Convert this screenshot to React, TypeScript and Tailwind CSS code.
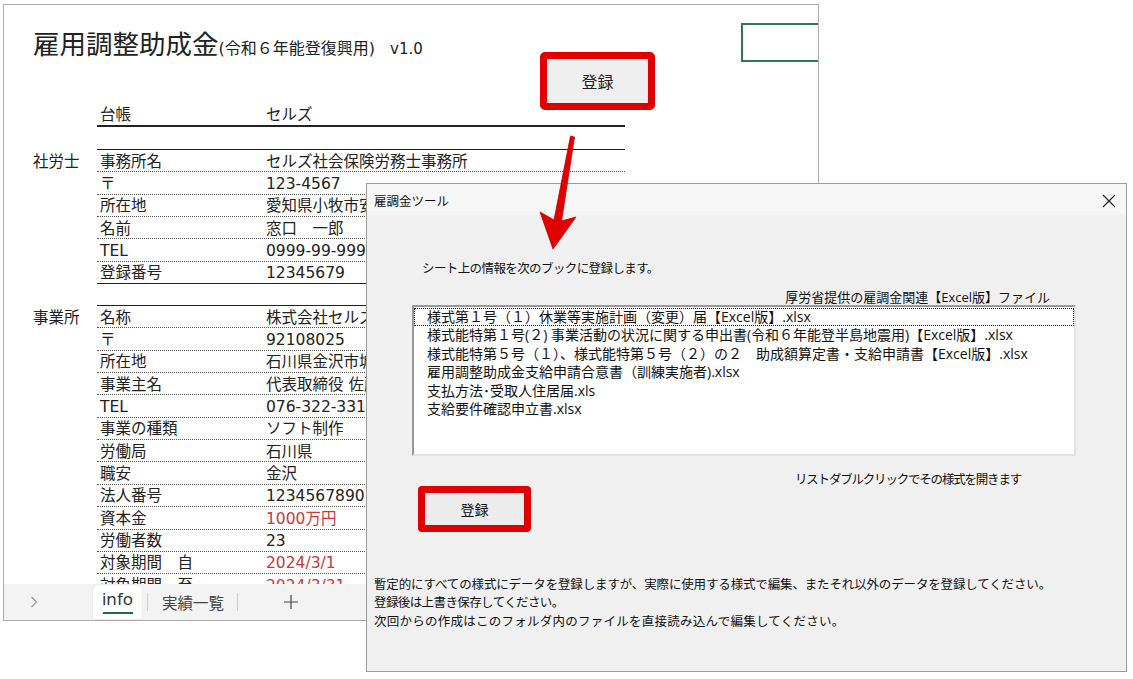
import React from "react";

type Row = { label: string; value: string; red?: boolean };

const sharoushi: Row[] = [
  { label: "事務所名", value: "セルズ社会保険労務士事務所" },
  { label: "〒", value: "123-4567" },
  { label: "所在地", value: "愛知県小牧市安田町１２３" },
  { label: "名前", value: "窓口　一郎" },
  { label: "TEL", value: "0999-99-9999" },
  { label: "登録番号", value: "12345679" },
];

const jigyousho: Row[] = [
  { label: "名称", value: "株式会社セルズ" },
  { label: "〒", value: "92108025" },
  { label: "所在地", value: "石川県金沢市城南１丁目" },
  { label: "事業主名", value: "代表取締役 佐藤 太郎" },
  { label: "TEL", value: "076-322-3311" },
  { label: "事業の種類", value: "ソフト制作" },
  { label: "労働局", value: "石川県" },
  { label: "職安", value: "金沢" },
  { label: "法人番号", value: "1234567890123" },
  { label: "資本金", value: "1000万円", red: true },
  { label: "労働者数", value: "23" },
  { label: "対象期間　自", value: "2024/3/1", red: true },
  { label: "対象期間　至", value: "2024/3/31", red: true },
];

const files = [
  "様式第１号（１）休業等実施計画（変更）届【Excel版】.xlsx",
  "様式能特第１号(２) 事業活動の状況に関する申出書(令和６年能登半島地震用)【Excel版】.xlsx",
  "様式能特第５号（１）、様式能特第５号（２）の２　助成額算定書・支給申請書【Excel版】.xlsx",
  "雇用調整助成金支給申請合意書（訓練実施者).xlsx",
  "支払方法･受取人住居届.xls",
  "支給要件確認申立書.xlsx",
];

function SheetRow({ row, last }: { row: Row; last?: boolean }) {
  return (
    <div
      className={
        last
          ? "flex items-center h-[22.35px] border-b border-[#222] whitespace-nowrap"
          : "flex items-center h-[22.35px] border-b border-dotted border-[#555] whitespace-nowrap"
      }
    >
      <div className="w-[166px] pl-[3px] pt-[3px]">{row.label}</div>
      <div className={row.red ? "pl-[3px] pt-[3px] text-[#c9383b]" : "pl-[3px] pt-[3px]"}>{row.value}</div>
    </div>
  );
}

function Group({ title, rows }: { title: string; rows: Row[] }) {
  return (
    <div className="flex">
      <div className="w-[64px] h-[22.35px] mt-[1px] pt-[3px] flex items-center">{title}</div>
      <div className="w-[528px] border-t border-[#222]">
        {rows.map((r, i) => (
          <SheetRow key={r.label + i} row={r} last={i === rows.length - 1} />
        ))}
      </div>
    </div>
  );
}

const App: React.FC = () => {
  return (
    <div className="relative w-[1133px] h-[679px] bg-white overflow-hidden font-['Noto_Sans_CJK_JP','Noto_Sans',sans-serif] text-[#222]">
      {/* Excel sheet window */}
      <div className="absolute left-[3px] top-[4px] w-[816px] h-[617px] border border-[#acacac] bg-white flex flex-col overflow-hidden">
        <div className="relative flex-1 overflow-hidden pl-[29px] text-[15.5px] font-['DejaVu_Sans','Noto_Sans_CJK_JP',sans-serif]">
          <div className="h-[99px] pt-[23px] flex items-baseline whitespace-nowrap">
            <span className="text-[26.5px] leading-[34px]">雇用調整助成金</span>
            <span className="text-[16px]">(令和６年能登復興用)</span>
            <span className="ml-[15px] text-[15px]">v1.0</span>
          </div>

          <div className="ml-[64px] w-[528px] h-[23px] flex items-center border-b-2 border-[#222]">
            <div className="w-[166px] pl-[3px] pt-[3px]">台帳</div>
            <div className="pl-[3px] pt-[3px]">セルズ</div>
          </div>
          <div className="h-[22px]" />
          <Group title="社労士" rows={sharoushi} />
          <div className="h-[21px]" />
          <Group title="事業所" rows={jigyousho} />

          {/* selected cell */}
          <div className="absolute left-[737px] top-[18px] w-[120px] h-[39px] border-2 border-[#2f7a55]" />
          {/* sheet button */}
          <div className="absolute left-[536px] top-[47px] w-[115px] h-[58px] rounded-[5px] border-[7px] border-[#e00000] bg-[#efefef] flex items-center justify-center text-[16px] text-[#222] font-['Noto_Sans_CJK_JP',sans-serif]">
            登録
          </div>
        </div>

        {/* sheet tabs */}
        <div className="h-[36px] bg-[#f3f3f3] flex items-center text-[#444] shrink-0">
          <div className="w-[60px] flex justify-center">
            <svg width="8" height="12" viewBox="0 0 8 12" fill="none" stroke="#9a9a9a" strokeWidth="1.2">
              <path d="M1.5 1l5 5-5 5" />
            </svg>
          </div>
          <div className="ml-[29px] w-[49px] h-[34px] self-start mt-[1px] bg-white rounded-t-[5px] shadow-[0_0_1px_rgba(0,0,0,0.25)] flex flex-col items-center justify-center">
            <span className="text-[17px] leading-[18px] font-['Noto_Sans',sans-serif] text-[#333]">info</span>
            <span className="mt-[4px] h-[2px] w-[30px] bg-[#1d6b44]" />
          </div>
          <div className="ml-[5px] w-px h-[18px] bg-[#cfcfcf]" />
          <div className="ml-[14px] text-[15.5px] text-[#444] mt-[2px]">実績一覧</div>
          <div className="ml-[13px] w-px h-[18px] bg-[#cfcfcf]" />
          <div className="ml-[46px]">
            <svg width="14" height="14" viewBox="0 0 14 14" stroke="#444" strokeWidth="1.2">
              <path d="M7 0v14M0 7h14" />
            </svg>
          </div>
        </div>
      </div>

      {/* dialog */}
      <div className="absolute left-[366px] top-[183px] w-[761px] h-[489px] border border-[#9c9c9c] bg-[#f0f0f0] flex flex-col text-[12.5px] text-[#111] font-['Open_Sans','Noto_Sans_CJK_JP',sans-serif]">
        <div className="h-[31px] bg-[#f6f6f6] flex items-center justify-between pl-[7px] pr-[10px]">
          <span className="mt-[5px]">雇調金ツール</span>
          <svg width="14" height="14" viewBox="0 0 14 14" stroke="#222" strokeWidth="1.1" className="mt-[2px]">
            <path d="M1 1l12 12M13 1L1 13" />
          </svg>
        </div>

        <div className="pl-[55px] mt-[45px] leading-[18px] tracking-[-0.6px]">シート上の情報を次のブックに登録します。</div>

        <div className="ml-[45px] w-[664px]">
          <div className="mt-[11px] text-right pr-[26px] leading-[16px] text-[13px]">厚労省提供の雇調金関連【Excel版】ファイル</div>
          <div className="h-[151px] pt-[1px] bg-white border-2 border-t-[#9a9a9a] border-l-[#9a9a9a] border-r-[#e2e2e2] border-b-[#e2e2e2] text-[14px]">
            {files.map((f, i) => (
              <div
                key={f}
                className={
                  i === 0
                    ? "h-[18.4px] leading-[18.4px] pl-[13px] whitespace-nowrap outline outline-1 outline-dotted outline-[#222] -outline-offset-1"
                    : "h-[18.4px] leading-[18.4px] pl-[13px] whitespace-nowrap"
                }
              >
                {f}
              </div>
            ))}
          </div>
        </div>

        <div className="flex items-start mt-[15px]">
          <div className="ml-[51px] mt-[15px] w-[113px] h-[46px] rounded-[4px] border-[7px] border-[#e00000] bg-[#ececec] flex items-center justify-center text-[14px]">
            登録
          </div>
          <div className="ml-[264px] leading-[18px] tracking-[-1.2px]">リストダブルクリックでその様式を開きます</div>
        </div>

        <div className="pl-[7px] mt-[44px] leading-[18.3px]">
          <div className="tracking-[-0.15px]">暫定的にすべての様式にデータを登録しますが、実際に使用する様式で編集、またそれ以外のデータを登録してください。</div>
          <div className="tracking-[-0.6px]">登録後は上書き保存してください。</div>
          <div className="tracking-[0.25px]">次回からの作成はこのフォルダ内のファイルを直接読み込んで編集してください。</div>
        </div>
      </div>

      {/* arrow */}
      <svg
        className="absolute left-0 top-0 pointer-events-none"
        width="1133"
        height="679"
        viewBox="0 0 1133 679"
      >
        <polygon
          points="570.5,136 574.5,137 561.5,221 576,217 553,249 540,212 554,220"
          fill="#e00000"
          stroke="#c80000"
          strokeWidth="0.8"
          strokeLinejoin="round"
        />
      </svg>
    </div>
  );
};

export default App;
